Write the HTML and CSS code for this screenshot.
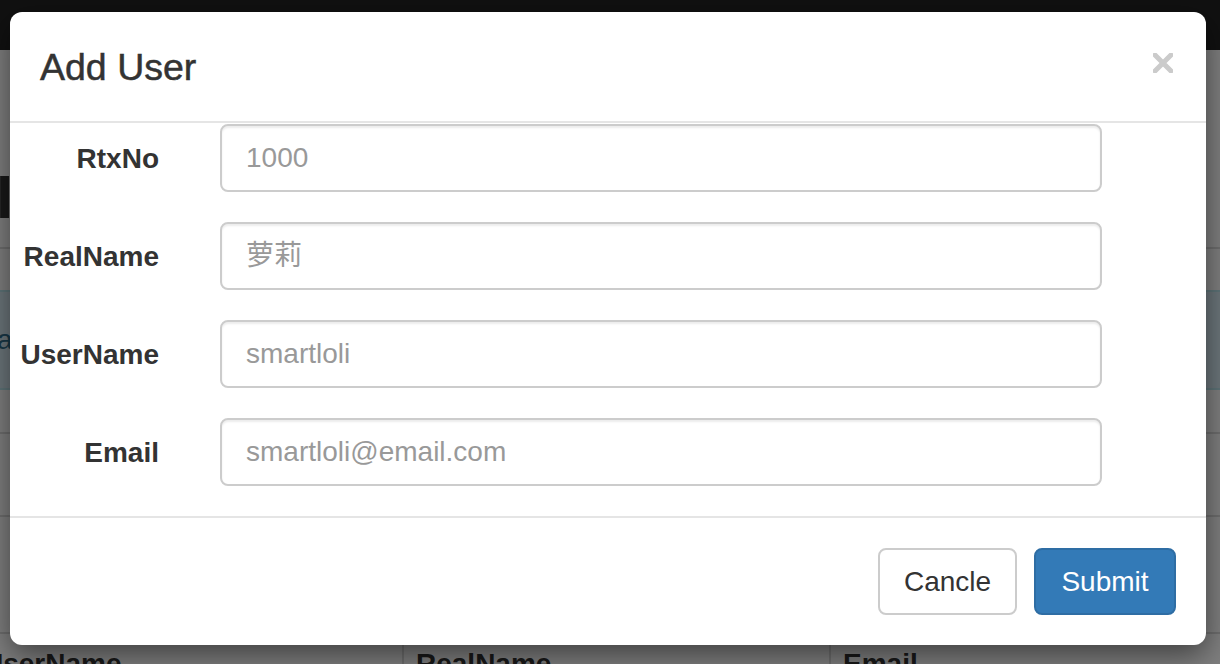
FILE: index.html
```html
<!DOCTYPE html>
<html lang="en">
<head>
<meta charset="utf-8">
<title>Add User</title>
<link rel="stylesheet" href="styles.css">
</head>
<body>
<div class="page">
  <div class="navbar"></div>
  <div class="content">
    <h1 class="page-title">Info</h1>
    <div class="rule rule-1"></div>
    <div class="alert">add user</div>
    <div class="rule rule-2"></div>
    <div class="rule rule-3"></div>
    <table class="users">
      <thead>
        <tr><th class="col-user">UserName</th><th class="col-real">RealName</th><th class="col-email">Email</th></tr>
      </thead>
    </table>
  </div>
</div>
<div class="backdrop"></div>
<div class="modal">
  <div class="modal-header">
    <h4 class="modal-title">Add User</h4>
    <button class="close" type="button" aria-label="Close">
      <svg width="20" height="20" viewBox="0 0 20 20"><path d="M2 2 L18 18 M18 2 L2 18" stroke="#cbcbcb" stroke-width="5" stroke-linecap="square" fill="none"/></svg>
    </button>
  </div>
  <form class="modal-body">
    <label class="form-label">RtxNo</label>
    <input class="form-control" type="text" placeholder="1000">
    <label class="form-label">RealName</label>
    <input class="form-control" type="text" placeholder="萝莉">
    <label class="form-label">UserName</label>
    <input class="form-control" type="text" placeholder="smartloli">
    <label class="form-label">Email</label>
    <input class="form-control" type="text" placeholder="smartloli@email.com">
  </form>
  <div class="modal-footer">
    <button class="btn btn-default" type="button">Cancle</button>
    <button class="btn btn-primary" type="button">Submit</button>
  </div>
</div>
</body>
</html>
```
FILE: styles.css
```css
* { box-sizing: border-box; }
html, body { margin: 0; padding: 0; }
body {
  width: 1220px;
  height: 664px;
  overflow: hidden;
  position: relative;
  background: #fff;
  color: #333;
  font-family: "Liberation Sans", Arial, "Noto Sans CJK SC", sans-serif;
}

/* background page */
.navbar { height: 50px; background: #222; }
.content { margin: 0 -40px 0 -29px; }
.page-title {
  margin: 117px 0 0 25px;
  font-size: 62px;
  line-height: 60px;
  font-weight: bold;
  color: #333;
}
.rule { height: 2px; background: #ddd; }
.rule-1 { margin-top: 20px; }
.alert {
  margin-top: 41px;
  height: 100px;
  padding: 34px 26px;
  background: #d9edf7;
  border-top: 2px solid #bce8f1;
  border-bottom: 2px solid #bce8f1;
  color: #31708f;
  font-size: 28px;
  line-height: 28px;
}
.rule-2 { margin-top: 42px; }
.rule-3 { margin-top: 81px; }
.users { margin-top: 115px; border-collapse: collapse; width: 100%; }
.users th {
  text-align: left;
  font-size: 28px;
  font-weight: bold;
  padding: 14px 12px;
  color: #333;
  border-top: 2px solid #ddd;
}
.col-user { width: 432px; }
.col-real { width: 427px; border-left: 2px solid #ddd; }
.col-email { border-left: 2px solid #ddd; }

.backdrop {
  position: absolute;
  inset: 0;
  background: rgba(0, 0, 0, 0.5);
}

/* modal */
.modal {
  position: absolute;
  left: 10px;
  top: 12px;
  width: 1196px;
  background: #fff;
  border-radius: 12px;
  box-shadow: 0 10px 30px rgba(0, 0, 0, 0.5);
}
.modal-header {
  height: 111px;
  padding: 0 33px 0 30px;
  border-bottom: 2px solid #e5e5e5;
  display: flex;
  align-items: center;
  justify-content: space-between;
}
.modal-title {
  margin: 1px 0 0 0;
  font-size: 37.5px;
  font-weight: normal;
  line-height: 40px;
  color: #333;
  -webkit-text-stroke: 0.5px #333;
}
.close {
  margin: -7px 0 0 0;
  padding: 0;
  border: 0;
  background: none;
  width: 20px;
  height: 20px;
  display: flex;
}

.modal-body {
  margin: 0;
  padding: 1px 0 30px 0;
  display: grid;
  grid-template-columns: 149px 882px;
  column-gap: 61px;
  row-gap: 30px;
  align-items: center;
}
.form-label {
  text-align: right;
  font-size: 28px;
  font-weight: bold;
  color: #333;
  padding-top: 1px;
}
.form-control {
  height: 68px;
  width: 882px;
  padding: 0 24px;
  border: 2px solid #ccc;
  border-radius: 8px;
  box-shadow: inset 0 2px 2px rgba(0, 0, 0, 0.075);
  font-family: "Liberation Sans", Arial, "Noto Sans CJK SC", sans-serif;
  font-size: 28px;
  color: #555;
  background: #fff;
  outline: none;
}
.form-control::placeholder { color: #999; opacity: 1; }

.modal-footer {
  border-top: 2px solid #e5e5e5;
  padding: 30px;
  display: flex;
  justify-content: flex-end;
  gap: 17px;
}
.btn {
  height: 67px;
  padding: 0 24px;
  border: 2px solid #ccc;
  border-radius: 8px;
  font-family: "Liberation Sans", Arial, sans-serif;
  font-size: 28px;
  line-height: 1;
}
.btn-default { background: #fff; color: #333; border-color: #ccc; width: 139px; }
.btn-primary { background: #337ab7; color: #fff; border-color: #2e6da4; width: 142px; }
```
